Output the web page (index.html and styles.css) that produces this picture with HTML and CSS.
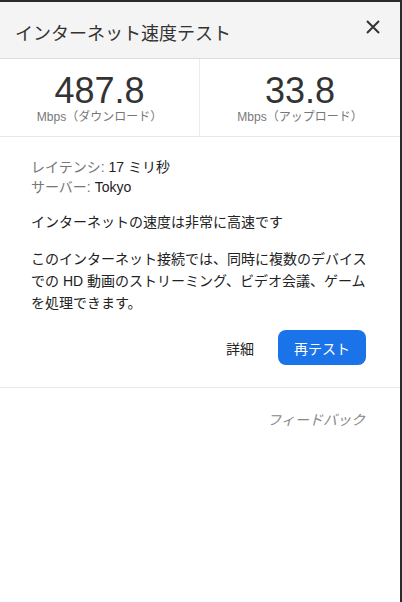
FILE: index.html
```html
<!DOCTYPE html>
<html lang="ja">
<head>
  <meta charset="UTF-8">
  <meta name="viewport" content="width=device-width, initial-scale=1.0">
  <title>インターネット速度テスト</title>
  <link rel="stylesheet" href="styles.css">
</head>
<body>
  <div class="panel">
    <div class="header">
      <div class="title">インターネット速度テスト</div>
      <button class="close" aria-label="閉じる">
        <svg width="14" height="14" viewBox="0 0 14 14">
          <path d="M1 1L13 13M13 1L1 13" stroke="#333" stroke-width="2" fill="none"/>
        </svg>
      </button>
    </div>

    <div class="stats">
      <div class="stat">
        <div class="value">487.8</div>
        <div class="unit">Mbps（ダウンロード）</div>
      </div>
      <div class="stat">
        <div class="value">33.8</div>
        <div class="unit">Mbps（アップロード）</div>
      </div>
    </div>

    <div class="content">
      <div class="info">
        <div><span class="label">レイテンシ:</span> 17 ミリ秒</div>
        <div><span class="label">サーバー:</span> Tokyo</div>
      </div>
      <p class="verdict">インターネットの速度は非常に高速です</p>
      <p class="desc">このインターネット接続では、同時に複数のデバイスでの HD 動画のストリーミング、ビデオ会議、ゲームを処理できます。</p>
      <div class="actions">
        <button class="link">詳細</button>
        <button class="primary">再テスト</button>
      </div>
    </div>

    <div class="footer">
      <a class="feedback" href="#">フィードバック</a>
    </div>
  </div>
</body>
</html>
```

FILE: styles.css
```css
body {
  margin: 0;
  background: #fff;
  font-family: Arial, "Liberation Sans", "Noto Sans CJK JP", sans-serif;
  color: #222;
}
.panel {
  box-sizing: border-box;
  height: 602px;
  border-top: 2px solid #2b2b2b;
  border-right: 2px solid #2b2b2b;
  background: #fff;
}
.header {
  display: flex;
  align-items: center;
  justify-content: space-between;
  height: 56px;
  padding: 0 20px 0 15px;
  background: #f4f4f4;
  border-bottom: 1px solid #dcdcdc;
}
.title {
  font-size: 18px;
  color: #333;
  padding-top: 4px;
}
.close {
  background: none;
  border: none;
  padding: 0;
  margin-top: -6px;
  cursor: pointer;
  display: flex;
}
.stats {
  display: grid;
  grid-template-columns: 199px 1fr;
  height: 77px;
  border-bottom: 1px solid #e8e8e8;
}
.stat {
  display: flex;
  flex-direction: column;
  align-items: center;
  padding-top: 14px;
}
.stat + .stat {
  border-left: 1px solid #ececec;
}
.value {
  font-size: 36px;
  line-height: 36px;
  color: #333;
}
.unit {
  font-size: 12px;
  line-height: 14px;
  color: #777;
  margin-top: 1px;
}
.content {
  padding: 20px 30px 22px 31px;
  font-size: 14px;
  border-bottom: 1px solid #e8e8e8;
}
.info {
  line-height: 20px;
  color: #222;
}
.label {
  color: #777;
}
.verdict {
  margin: 14px 0 0;
  line-height: 22px;
}
.desc {
  margin: 15px 0 0;
  line-height: 22px;
}
.actions {
  display: flex;
  justify-content: flex-end;
  align-items: center;
  gap: 24px;
  margin-top: 16px;
  padding-right: 4px;
}
.actions button {
  font-family: inherit;
  font-size: 14px;
  border: none;
  cursor: pointer;
}
.link {
  background: none;
  color: #222;
  padding: 0;
}
.primary {
  background: #1a73e8;
  color: #fff;
  width: 88px;
  height: 35px;
  border-radius: 8px;
}
.footer {
  display: flex;
  justify-content: flex-end;
  padding: 21px 35px 0 0;
}
.feedback {
  font-size: 14px;
  font-style: italic;
  color: #888;
  text-decoration: none;
}
```
